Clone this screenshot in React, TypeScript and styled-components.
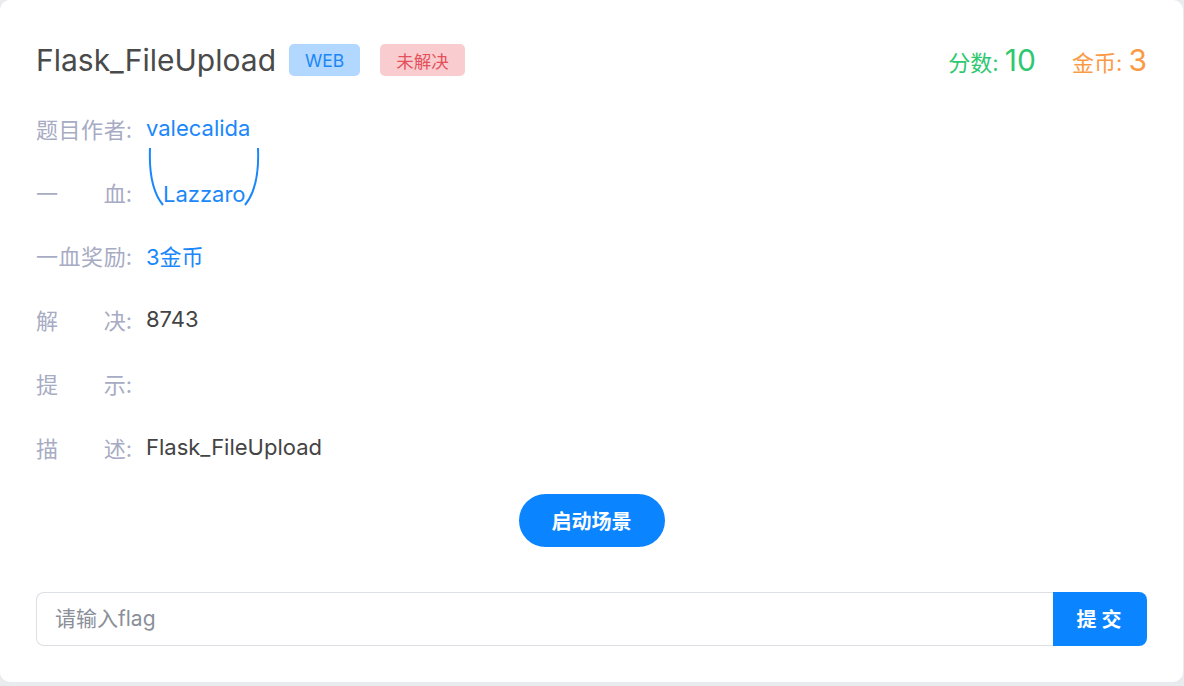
import React from 'react';
import styled, { createGlobalStyle } from 'styled-components';

const GlobalStyle = createGlobalStyle`
  html, body {
    margin: 0;
    padding: 0;
    background: #e9ebee;
  }
  body {
    font-family: Inter, "Noto Sans CJK SC", sans-serif;
  }
  * {
    box-sizing: border-box;
  }
`;

const Card = styled.div`
  width: 1183px;
  height: 682px;
  background: #fff;
  border-radius: 10px;
  padding: 41px 36px 0 36px;
  display: flex;
  flex-direction: column;
`;

const Header = styled.div`
  display: flex;
  align-items: center;
  height: 38px;
`;

const Title = styled.h1`
  margin: 0;
  font-size: 30px;
  font-weight: 400;
  color: #4a4a4a;
  margin-right: 13px;
`;

const Badge = styled.span<{ $tone: 'blue' | 'red' }>`
  display: inline-flex;
  align-items: center;
  justify-content: center;
  height: 32px;
  padding: 0 16px;
  border-radius: 5px;
  font-size: 17.5px;
  margin-right: 20px;
  background: ${({ $tone }) => ($tone === 'blue' ? '#b3d8ff' : '#f9cdd0')};
  color: ${({ $tone }) => ($tone === 'blue' ? '#1b86f7' : '#e5505a')};
`;

const Stats = styled.div`
  margin-left: auto;
  display: flex;
  align-items: baseline;
  gap: 36px;
`;

const Stat = styled.span<{ $color: string }>`
  color: ${({ $color }) => $color};
  font-size: 22px;

  b {
    font-weight: 400;
    font-size: 30px;
  }
`;

const InfoList = styled.div`
  display: flex;
  flex-direction: column;
  margin-top: 17px;
`;

const Row = styled.div`
  display: flex;
  align-items: center;
  height: 63.8px;
  font-size: 22px;
`;

const Label = styled.span`
  width: 96px;
  display: flex;
  justify-content: space-between;
  color: #a7abc3;
  margin-right: 14px;
  flex-shrink: 0;
`;

const Value = styled.span<{ $link?: boolean }>`
  color: ${({ $link }) => ($link ? '#1a87fb' : '#444')};
`;

const BloodValue = styled.span`
  position: relative;
  display: inline-block;
  color: #1a87fb;
  padding: 0 15px 0 17px;
  margin-top: 4px;
`;

const Paren = styled.svg<{ $side: 'left' | 'right' }>`
  position: absolute;
  top: -33px;
  ${({ $side }) => ($side === 'left' ? 'left: 2px;' : 'right: 1px;')}
  width: 16px;
  height: 58px;
`;

const Actions = styled.div`
  display: flex;
  justify-content: center;
  margin-top: 15px;
`;

const StartButton = styled.button`
  width: 146px;
  height: 53px;
  border: none;
  border-radius: 27px;
  background: #0a84ff;
  color: #fff;
  font-size: 20px;
  font-weight: 700;
  font-family: inherit;
`;

const FlagForm = styled.div`
  display: flex;
  margin-top: 45px;
  height: 54px;
`;

const FlagInput = styled.input`
  flex: 1;
  border: 1px solid #dcdfe3;
  border-right: none;
  border-radius: 8px 0 0 8px;
  padding: 0 18px;
  font-size: 21px;
  font-family: inherit;
  color: #333;
  outline: none;

  &::placeholder {
    color: #8a8f99;
  }
`;

const SubmitButton = styled.button`
  width: 94px;
  border: none;
  border-radius: 0 8px 8px 0;
  background: #0a84ff;
  color: #fff;
  font-size: 20px;
  font-weight: 700;
  letter-spacing: 5px;
  padding-left: 9px;
  font-family: inherit;
`;

const rows: { label: string[]; value: React.ReactNode }[] = [
  { label: ['一', '血', '奖', '励:'], value: <Value $link>3金币</Value> },
  { label: ['解', '决:'], value: <Value>8743</Value> },
  { label: ['提', '示:'], value: null },
  { label: ['描', '述:'], value: <Value>Flask_FileUpload</Value> },
];

const App: React.FC = () => {
  return (
    <>
      <GlobalStyle />
      <Card>
        <Header>
          <Title>Flask_FileUpload</Title>
          <Badge $tone="blue">WEB</Badge>
          <Badge $tone="red">未解决</Badge>
          <Stats>
            <Stat $color="#2ec870">分数: <b>10</b></Stat>
            <Stat $color="#fb9a45">金币: <b>3</b></Stat>
          </Stats>
        </Header>

        <InfoList>
          <Row>
            <Label>{['题', '目', '作', '者:'].map((c) => <span key={c}>{c}</span>)}</Label>
            <Value $link>valecalida</Value>
          </Row>
          <Row>
            <Label><span>一</span><span>血:</span></Label>
            <BloodValue>
              <Paren $side="left" viewBox="0 0 16 58">
                <path d="M2 0 C1 24 5 45 15 57" fill="none" stroke="#1a87fb" strokeWidth="2" />
              </Paren>
              Lazzaro
              <Paren $side="right" viewBox="0 0 16 58">
                <path d="M14 0 C15 24 11 45 1 57" fill="none" stroke="#1a87fb" strokeWidth="2" />
              </Paren>
            </BloodValue>
          </Row>
          {rows.map((r, i) => (
            <Row key={i}>
              <Label>{r.label.map((c) => <span key={c}>{c}</span>)}</Label>
              {r.value}
            </Row>
          ))}
        </InfoList>

        <Actions>
          <StartButton>启动场景</StartButton>
        </Actions>

        <FlagForm>
          <FlagInput placeholder="请输入flag" />
          <SubmitButton>提交</SubmitButton>
        </FlagForm>
      </Card>
    </>
  );
};

export default App;
